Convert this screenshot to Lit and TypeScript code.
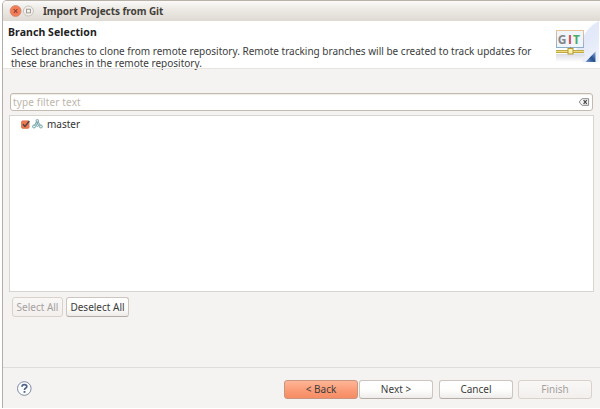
import { LitElement, html, css } from "lit";
import { customElement } from "lit/decorators.js";

@customElement("app-root")
export class AppRoot extends LitElement {
  static styles = css`
    :host { display: block; width: 600px; height: 409px; background: #fff; overflow: hidden;
      font-family: "Noto Sans", "Open Sans", sans-serif; font-size: 10px; color: #3c3c3c; }
    * { box-sizing: border-box; }
    svg { display: block; flex: none; }
    .window { margin-left: 2px; width: 598px; height: 408px; display: flex; flex-direction: column;
      background: #f4f3f1; border-left: 1px solid #b5aea7; border-top: 1px solid #b9b2a9;
      border-top-left-radius: 5px; overflow: hidden; }
    .title { height: 20px; flex: none; display: flex; align-items: center; padding-left: 6px;
      background: linear-gradient(#fbfaf9, #efece8 35%, #ded9d2); }
    .title b { margin-left: 7px; line-height: 20px; color: #444039; white-space: nowrap; letter-spacing: -.06px; }
    .head { height: 47px; flex: none; display: flex; justify-content: space-between; background: #fff; }
    .copy { padding: 5px 0 0 5px; }
    .copy b { display: block; color: #222; line-height: 13px; font-size: 10.5px; letter-spacing: .08px; }
    .copy p { margin: 6px 0 0 3px; width: 532px; line-height: 12px; }
    .main { height: 300px; flex: none; border-top: 1px solid #e6e4e1; border-bottom: 1px solid #dfddda;
      padding: 24px 6px 0 6px; }
    .filter { height: 18px; margin-left: 1px; border: 1px solid #c3bab0; border-radius: 3px; background: #fff;
      display: flex; align-items: center; justify-content: space-between; padding: 0 2px;
      color: #bdb5ab; margin-right: 1px; box-shadow: inset 0 1px 1px #eeebe8; }
    .filter span { letter-spacing: .14px; }
    .list { height: 177px; margin-top: 4px; border: 1px solid #d8d4cf; background: #fff; padding: 3px 11px; }
    .row { display: flex; align-items: center; height: 10px; }
    .row svg + svg { margin-left: 2px; }
    .row span { margin-left: 4px; color: #333; line-height: 10px; }
    .actions { display: flex; gap: 3px; margin: 5px 0 0 3px; }
    .btn { height: 19px; border: 1px solid #cdc6be; border-bottom-color: #b5ada5; border-radius: 3px;
      background: linear-gradient(#fff, #fdfdfc 55%, #eeecea); display: flex; align-items: center;
      justify-content: center; width: 74px; padding: 0; font: inherit; color: #3c3c3c; white-space: nowrap; line-height: 17px; }
    .actions .btn { height: 20px; padding-top: 1px; }
    .btn.dim { border-color: #d9d2cb; background: linear-gradient(#f9f8f7, #f2efed); color: #a5a19d; }
    .btn.primary { background: linear-gradient(#ffb697, #fa9b76 55%, #f58c64); border-color: #c9957f; }
    .w51 { width: 51px; } .w63 { width: 63px; }
    .foot { flex: 1; display: flex; align-items: flex-start; padding: 12px 8px 0 14px; }
    .foot .help { margin-top: 1px; margin-right: auto; }
    .g1 { margin-left: 1px; } .g6 { margin-left: 6px; } .g5 { margin-left: 5px; }
  `;

  render() {
    return html`
      <div class="window">
        <div class="title">
          <svg width="27" height="14" viewBox="0 0 27 14">
            <circle cx="6.6" cy="7" r="5.5" fill="#f47c56" stroke="#cf8a73" stroke-width=".8"/>
            <path d="M4.8 5.2l3.6 3.6M8.4 5.2L4.8 8.8" stroke="#8a4632" stroke-width="1.1"/>
            <circle cx="19.4" cy="7" r="5" fill="#f3f1ee" stroke="#c2bcb5" stroke-width=".9"/>
            <rect x="17.5" y="5.2" width="4" height="3.7" fill="none" stroke="#99938c" stroke-width=".9"/>
          </svg>
          <b>Import Projects from Git</b>
        </div>
        <div class="head">
          <div class="copy">
            <b>Branch Selection</b>
            <p>Select branches to clone from remote repository. Remote tracking branches will be created to track updates for these branches in the remote repository.</p>
          </div>
          <svg width="50" height="47" viewBox="550 21 50 47">
            <defs>
              <linearGradient id="sweep" x1="0" y1="0" x2="1" y2="1"><stop offset="0" stop-color="#e3eafa"/><stop offset=".6" stop-color="#e3e9f9"/><stop offset="1" stop-color="#f1f4fd"/></linearGradient>
              <linearGradient id="tri" x1="0" y1="1" x2="1" y2="0"><stop offset="0" stop-color="#7d9cc9"/><stop offset=".5" stop-color="#244e8f"/><stop offset="1" stop-color="#8eb0dd"/></linearGradient>
              <linearGradient id="frame" x1="0" y1="0" x2="0" y2="1"><stop offset="0" stop-color="#e9c193"/><stop offset="1" stop-color="#8caec9"/></linearGradient>
              <linearGradient id="shade" x1="0" y1="0" x2="0" y2="1"><stop offset="0" stop-color="#dcdde5"/><stop offset="1" stop-color="#fff"/></linearGradient>
            </defs>
            <path d="M599 21v41h-44Q572 58 580 44Q586 27 599 21z" fill="url(#sweep)"/>
            <path d="M556 54h29l-3 8h-26z" fill="url(#shade)"/>
            <rect x="556.5" y="30.5" width="27" height="17" fill="#f0f4fb" stroke="url(#frame)"/>
            <g font-family="Open Sans, sans-serif" font-size="12" font-weight="700"><text x="557.8" y="43.6" fill="#85858a">G</text><text x="567.9" y="43.6" fill="#c64b51">I</text><text x="573" y="43.6" fill="#4dab63">T</text></g>
            <path d="M556 50.5h28M556 52.5h28" stroke="#c0a844"/><path d="M556 51.5h28" stroke="#f1dc80"/>
            <path d="M570.5 47v2" stroke="#a58e40"/><rect x="568" y="48.5" width="5" height="5.5" fill="#fff1b1" stroke="#b5982f"/>
            <path d="M595.5 51.5v10.5h-10z" fill="url(#tri)"/>
          </svg>
        </div>
        <div class="main">
          <div class="filter"><span>type filter text</span>
            <svg width="11" height="8" viewBox="0 0 11 8"><path d="M3.2.7H9.6v6.6H3.2L.7 5V3z" fill="#f6f5f4" stroke="#888"/><path d="M4.6 2.2l3.2 3.6M7.8 2.2L4.6 5.8" stroke="#444" stroke-width="1.2"/></svg>
          </div>
          <div class="list"><div class="row">
            <svg width="9" height="9" viewBox="0 0 9 9"><rect x=".6" y=".9" width="7.4" height="7.4" rx="1" fill="#f07750" stroke="#d8704c" stroke-width=".9"/><path d="M2 4.2l2 2.2L8.3 1" fill="none" stroke="#444" stroke-width="1.3"/></svg>
            <svg width="11" height="10" viewBox="0 0 11 10"><path d="M5.3 1.5L1.9 7.5M5.3 1.5L9 7.5M5.3 2v4" fill="none" stroke="#84acb0" stroke-width="1.2"/><g fill="#d9eeee" stroke="#70a3a6" stroke-width=".9"><circle cx="5.3" cy="1.8" r="1.3"/><circle cx="2" cy="7.5" r="1.5"/><circle cx="5.4" cy="6.3" r="1.2"/><circle cx="8.9" cy="7.5" r="1.5"/></g></svg>
            <span>master</span></div></div>
          <div class="actions"><button class="btn dim w51">Select All</button><button class="btn w63">Deselect All</button></div>
        </div>
        <div class="foot">
          <svg class="help" width="15" height="15" viewBox="0 0 15 15"><circle cx="7.3" cy="7.5" r="6.8" fill="#fbfcfd" stroke="#71809b" stroke-width=".9"/><path d="M5 5.7Q5 3.6 7.4 3.6Q9.8 3.6 9.8 5.5Q9.8 6.7 8.5 7.3Q7.5 7.8 7.5 9" fill="none" stroke="#506286" stroke-width="1.7"/><rect x="6.6" y="10" width="1.8" height="1.8" fill="#506286"/></svg>
          <button class="btn primary">&lt; Back</button><button class="btn g1">Next &gt;</button><button class="btn g6">Cancel</button><button class="btn dim g5">Finish</button>
        </div>
      </div>`;
  }
}
